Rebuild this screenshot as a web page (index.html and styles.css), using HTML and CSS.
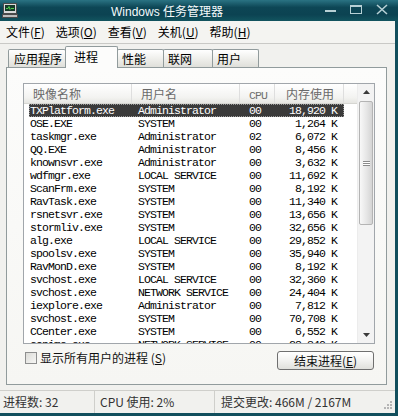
FILE: index.html
```html
<!DOCTYPE html>
<html lang="zh-CN">
<head>
<meta charset="utf-8">
<title>Windows 任务管理器</title>
<link rel="stylesheet" href="styles.css">
</head>
<body>
<div class="window">
  <div class="titlebar">
    <svg class="app-icon" width="16" height="15" viewBox="0 0 16 15">
      <rect x="1.5" y="0.5" width="13" height="10" fill="#d9d9d9" stroke="#4a4a4a"/>
      <rect x="3" y="2" width="10" height="6" fill="#163a2a"/>
      <path d="M4 5.5h2l1-2 1 3 1-1h3" stroke="#4fd04f" stroke-width="1" fill="none"/>
      <rect x="0.5" y="11.5" width="15" height="3" fill="#bdbdbd" stroke="#4a4a4a"/>
    </svg>
    <span class="title">Windows 任务管理器</span>
    <svg class="controls" width="78" height="21" viewBox="0 0 78 21">
      <rect x="5" y="10" width="11" height="2" fill="#b7d0d5"/>
      <rect x="30.5" y="5.5" width="11" height="8" fill="none" stroke="#b7d0d5"/>
      <rect x="30" y="5" width="12" height="2" fill="#b7d0d5"/>
      <path d="M57 5l10 9M67 5l-10 9" stroke="#b7d0d5" stroke-width="1.6"/>
    </svg>
  </div>
  <div class="frame">
    <div class="menubar">
      <span class="menu-item">文件(<u>F</u>)</span>
      <span class="menu-item">选项(<u>O</u>)</span>
      <span class="menu-item">查看(<u>V</u>)</span>
      <span class="menu-item">关机(<u>U</u>)</span>
      <span class="menu-item">帮助(<u>H</u>)</span>
    </div>
    <div class="tabs">
      <div class="tab tab-apps">应用程序</div>
      <div class="tab tab-active">进程</div>
      <div class="tab tab-perf">性能</div>
      <div class="tab tab-net">联网</div>
      <div class="tab tab-users">用户</div>
    </div>
    <div class="panel">
      <div class="listview">
        <div class="list-main">
          <div class="list-header">
            <div class="hcol col-name">映像名称</div>
            <div class="hcol col-user">用户名</div>
            <div class="hcol col-cpu"><span class="mono">CPU</span></div>
            <div class="hcol col-mem">内存使用</div>
            <div class="hcol col-fill"></div>
          </div>
          <div class="list-body">
            <div class="row selected"><span class="c-name">TXPlatform.exe</span><span class="c-user">Administrator</span><span class="c-cpu">00</span><span class="c-mem">18,920 K</span></div>
            <div class="row"><span class="c-name">OSE.EXE</span><span class="c-user">SYSTEM</span><span class="c-cpu">00</span><span class="c-mem">1,264 K</span></div>
            <div class="row"><span class="c-name">taskmgr.exe</span><span class="c-user">Administrator</span><span class="c-cpu">02</span><span class="c-mem">6,072 K</span></div>
            <div class="row"><span class="c-name">QQ.EXE</span><span class="c-user">Administrator</span><span class="c-cpu">00</span><span class="c-mem">8,456 K</span></div>
            <div class="row"><span class="c-name">knownsvr.exe</span><span class="c-user">Administrator</span><span class="c-cpu">00</span><span class="c-mem">3,632 K</span></div>
            <div class="row"><span class="c-name">wdfmgr.exe</span><span class="c-user">LOCAL SERVICE</span><span class="c-cpu">00</span><span class="c-mem">11,692 K</span></div>
            <div class="row"><span class="c-name">ScanFrm.exe</span><span class="c-user">SYSTEM</span><span class="c-cpu">00</span><span class="c-mem">8,192 K</span></div>
            <div class="row"><span class="c-name">RavTask.exe</span><span class="c-user">SYSTEM</span><span class="c-cpu">00</span><span class="c-mem">11,340 K</span></div>
            <div class="row"><span class="c-name">rsnetsvr.exe</span><span class="c-user">SYSTEM</span><span class="c-cpu">00</span><span class="c-mem">13,656 K</span></div>
            <div class="row"><span class="c-name">stormliv.exe</span><span class="c-user">SYSTEM</span><span class="c-cpu">00</span><span class="c-mem">32,656 K</span></div>
            <div class="row"><span class="c-name">alg.exe</span><span class="c-user">LOCAL SERVICE</span><span class="c-cpu">00</span><span class="c-mem">29,852 K</span></div>
            <div class="row"><span class="c-name">spoolsv.exe</span><span class="c-user">SYSTEM</span><span class="c-cpu">00</span><span class="c-mem">35,940 K</span></div>
            <div class="row"><span class="c-name">RavMonD.exe</span><span class="c-user">SYSTEM</span><span class="c-cpu">00</span><span class="c-mem">8,192 K</span></div>
            <div class="row"><span class="c-name">svchost.exe</span><span class="c-user">LOCAL SERVICE</span><span class="c-cpu">00</span><span class="c-mem">32,360 K</span></div>
            <div class="row"><span class="c-name">svchost.exe</span><span class="c-user">NETWORK SERVICE</span><span class="c-cpu">00</span><span class="c-mem">24,404 K</span></div>
            <div class="row"><span class="c-name">iexplore.exe</span><span class="c-user">Administrator</span><span class="c-cpu">00</span><span class="c-mem">7,812 K</span></div>
            <div class="row"><span class="c-name">svchost.exe</span><span class="c-user">SYSTEM</span><span class="c-cpu">00</span><span class="c-mem">70,708 K</span></div>
            <div class="row"><span class="c-name">CCenter.exe</span><span class="c-user">SYSTEM</span><span class="c-cpu">00</span><span class="c-mem">6,552 K</span></div>
            <div class="row"><span class="c-name">conime.exe</span><span class="c-user">NETWORK SERVICE</span><span class="c-cpu">00</span><span class="c-mem">28,340 K</span></div>
          </div>
        </div>
        <div class="scrollbar">
          <div class="sb-btn"><svg width="7" height="4" viewBox="0 0 7 4"><path d="M0 4L3.5 0 7 4z" fill="#3a3a3a"/></svg></div>
          <div class="sb-track">
            <div class="sb-thumb"><span class="grip"></span></div>
          </div>
          <div class="sb-btn"><svg width="7" height="4" viewBox="0 0 7 4"><path d="M0 0L3.5 4 7 0z" fill="#3a3a3a"/></svg></div>
        </div>
      </div>
      <div class="options">
        <label class="check"><span class="box"></span>显示所有用户的进程 (<u>S</u>)</label>
        <button class="btn">结束进程(<u>E</u>)</button>
      </div>
    </div>
    <div class="statusbar">
      <div class="sb-cell cell-procs">进程数: 32</div>
      <div class="sb-cell cell-cpu">CPU 使用: 2%</div>
      <div class="sb-cell cell-commit">提交更改: 466M / 2167M</div>
      <svg class="size-grip" width="11" height="11" viewBox="0 0 11 11">
        <g fill="#b5b5b5">
          <rect x="8" y="0" width="2" height="2"/>
          <rect x="5" y="3" width="2" height="2"/><rect x="8" y="3" width="2" height="2"/>
          <rect x="2" y="6" width="2" height="2"/><rect x="5" y="6" width="2" height="2"/><rect x="8" y="6" width="2" height="2"/>
        </g>
      </svg>
    </div>
  </div>
</div>
</body>
</html>
```
FILE: styles.css
```css
* { box-sizing: border-box; margin: 0; padding: 0; }
html, body { width: 398px; height: 416px; overflow: hidden; }
body {
  font-family: "Noto Sans CJK SC", "Liberation Sans", sans-serif;
  font-size: 12px;
  color: #000;
  background: #f1f1ee;
}
u { text-decoration: underline; text-underline-offset: 1px; }

.window { width: 398px; height: 416px; display: flex; flex-direction: column; }

.titlebar {
  height: 21px;
  flex: none;
  display: flex;
  align-items: center;
  background: linear-gradient(#2a7383, #0d4655 35%, #0c4352 70%, #12545f);
  color: #fff;
}
.app-icon { margin-left: 2px; flex: none; }
.title {
  margin-left: 93px;
  font-family: "Liberation Sans", "Noto Sans CJK SC", sans-serif;
  font-size: 12px;
  color: #f4fafb;
}
.controls { margin-left: auto; flex: none; }

.frame {
  flex: 1;
  display: flex;
  flex-direction: column;
  border-right: 3px solid #124f5d;
  border-bottom: 3px solid #124f5d;
  background: #f1f1ee;
}

.menubar {
  height: 23px;
  flex: none;
  display: flex;
  align-items: center;
  gap: 11px;
  padding-left: 6px;
  border-bottom: 1px solid #c9c9c6;
  background: #f4f4f1;
  font-size: 12px;
}
.menu-item { line-height: 14px; }

.tabs {
  height: 23px;
  flex: none;
  display: flex;
  align-items: flex-end;
  padding-left: 8px;
  position: relative;
  z-index: 1;
}
.tab {
  height: 18px;
  border: 1px solid #919b9c;
  border-bottom: none;
  border-radius: 2px 2px 0 0;
  background: linear-gradient(#ffffff, #ecece8 60%, #dfdfda);
  font-size: 12px;
  line-height: 17px;
  padding-left: 5px;
  margin-right: -1px;
  white-space: nowrap;
}
.tab-apps { width: 58px; }
.tab-perf { width: 47px; padding-left: 4px; }
.tab-net { width: 50px; padding-left: 4px; }
.tab-users { width: 47px; padding-left: 4px; }
.tab-active {
  width: 53px;
  height: 22px;
  margin-bottom: -1px;
  background: #fcfcfb;
  padding-left: 8px;
  line-height: 20px;
  position: relative;
  z-index: 2;
}

.panel {
  width: 381px;
  height: 318px;
  margin-left: 6px;
  flex: none;
  border: 1px solid #919b9c;
  background: linear-gradient(#fcfcfb, #f6f6f3);
  padding: 15px 11px 0 16px;
}

.listview {
  width: 352px;
  height: 261px;
  border: 1px solid #a1a6ab;
  background: #fff;
  display: flex;
}
.list-main { width: 333px; display: flex; flex-direction: column; }
.list-header {
  height: 20px;
  flex: none;
  display: flex;
  background: linear-gradient(#ffffff, #f3f3f1 70%, #e6e6e2);
  border-bottom: 1px solid #d6d6d2;
  color: #6a6a6a;
  font-size: 12px;
  line-height: 19px;
}
.hcol { border-right: 1px solid #dedede; padding-left: 9px; white-space: nowrap; overflow: hidden; }
.col-name { width: 108px; }
.col-user { width: 108px; }
.col-cpu { width: 35px; }
.col-mem { width: 69px; text-align: right; padding-right: 9px; padding-left: 0; }
.col-fill { width: 13px; border-right: none; }
.mono {
  font-family: "Liberation Mono", monospace;
  font-size: 11.5px;
  letter-spacing: -0.9px;
  color: #707070;
}

.list-body { flex: 1; overflow: hidden; }
.row {
  display: flex;
  height: 13px;
  width: 315px;
  margin-left: 5px;
  font-family: "Liberation Mono", monospace;
  font-size: 11.5px;
  letter-spacing: -0.9px;
  line-height: 13px;
  white-space: nowrap;
}
.row span { overflow: hidden; }
.c-name { width: 103px; padding-left: 1px; }
.c-user { width: 108px; padding-left: 6px; }
.c-cpu { width: 35px; padding-left: 9px; }
.c-mem { width: 69px; text-align: right; padding-right: 7px; }
.row.selected {
  background: #3a3a3a;
  color: #fff;
  outline: 1px dotted #9a9a9a;
  outline-offset: -1px;
}

.scrollbar {
  width: 17px;
  display: flex;
  flex-direction: column;
  background: #f3f3f3;
  border-left: 1px solid #ececec;
}
.sb-btn {
  height: 16px;
  flex: none;
  display: flex;
  align-items: center;
  justify-content: center;
}
.sb-track { flex: 1; padding: 1px 1px 0 1px; }
.sb-thumb {
  height: 124px;
  border: 1px solid #b4b4b4;
  border-radius: 2px;
  background: linear-gradient(90deg, #f8f8f8, #e4e4e4 60%, #d4d4d4);
  display: flex;
  align-items: center;
  justify-content: center;
}
.grip {
  width: 7px;
  height: 5px;
  border-top: 1px solid #8a8a8a;
  border-bottom: 1px solid #8a8a8a;
  background: linear-gradient(#fff 0 1px, #8a8a8a 1px 2px, #fff 2px);
}

.options {
  margin-top: 7px;
  display: flex;
  justify-content: space-between;
  align-items: flex-start;
}
.check {
  display: flex;
  align-items: center;
  margin-left: 2px;
  font-size: 12px;
  line-height: 13px;
  color: #111;
}
.box {
  width: 12px;
  height: 12px;
  border: 1px solid #8e8f8f;
  background: linear-gradient(135deg, #dcdcd8, #f6f6f4);
  margin-right: 3px;
}
.btn {
  width: 97px;
  height: 19px;
  margin-right: 1px;
  border: 1px solid #6f6f6f;
  border-radius: 3px;
  background: linear-gradient(#ffffff, #f2f2f0 50%, #e0e0dc);
  font-family: "Noto Sans CJK SC", "Liberation Sans", sans-serif;
  font-size: 12px;
  line-height: 16px;
  color: #111;
}

.statusbar {
  margin-top: 5px;
  height: 23px;
  flex: none;
  display: flex;
  align-items: stretch;
  border-top: 1px solid #cfcfcb;
  font-size: 12px;
  color: #333;
  position: relative;
}
.sb-cell { line-height: 22px; white-space: nowrap; }
.cell-procs { width: 95px; padding-left: 3px; border-right: 1px solid #cfcfcb; }
.cell-cpu { width: 120px; padding-left: 5px; border-right: 1px solid #cfcfcb; }
.cell-commit { flex: 1; padding-left: 6px; }
.size-grip { position: absolute; right: 2px; bottom: 1px; }
```
